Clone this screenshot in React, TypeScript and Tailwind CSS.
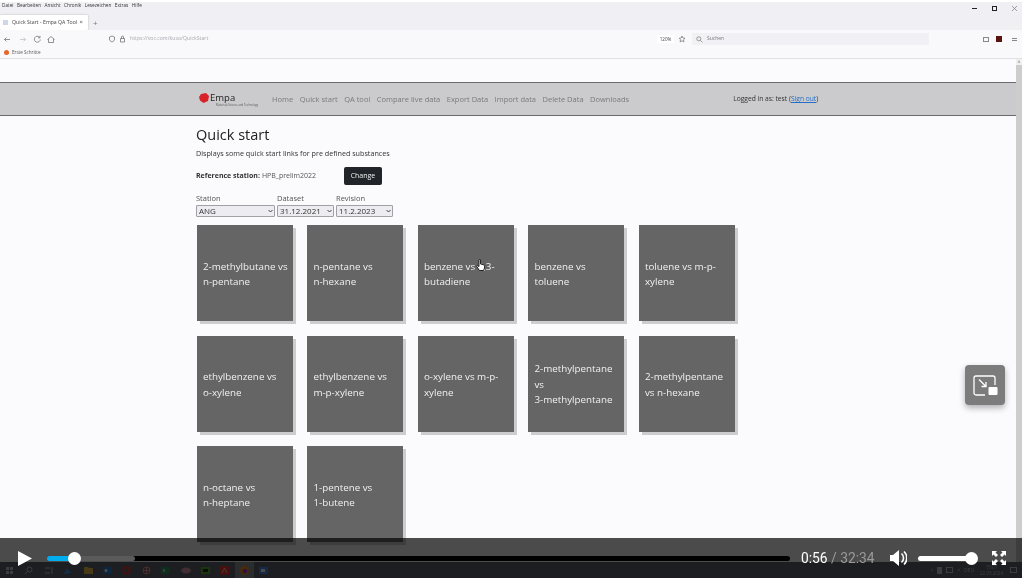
const cards = [
  ["2-methylbutane vs", "n-pentane"],
  ["n-pentane vs", "n-hexane"],
  ["benzene vs 1,3-", "butadiene"],
  ["benzene vs", "toluene"],
  ["toluene vs m-p-", "xylene"],
  ["ethylbenzene vs", "o-xylene"],
  ["ethylbenzene vs", "m-p-xylene"],
  ["o-xylene vs m-p-", "xylene"],
  ["2-methylpentane", "vs", "3-methylpentane"],
  ["2-methylpentane", "vs n-hexane"],
  ["n-octane vs", "n-heptane"],
  ["1-pentene vs", "1-butene"],
]

const menu = ["Datei", "Bearbeiten", "Ansicht", "Chronik", "Lesezeichen", "Extras", "Hilfe"]
const nav = ["Home", "Quick start", "QA tool", "Compare live data", "Export Data", "Import data", "Delete Data", "Downloads"]

function Card({ lines }: { lines: string[] }) {
  return (
    <div className="w-[96px] h-[96px] bg-[#666565] shadow-[3px_3px_0_#cdcdcf] flex flex-col justify-center pt-[2px] pl-[6px] text-[#f1f1f1] text-[9.8px] leading-[15.5px]">
      {lines.map((l) => (
        <span key={l} className="whitespace-nowrap">{l}</span>
      ))}
    </div>
  )
}

function Select({ value, width }: { value: string; width: string }) {
  return (
    <div className={"relative mt-[2px] " + width}>
      <select className="block w-full h-[12px] appearance-none bg-[#ededf1] border border-[#a0a0a6] rounded-[1px] text-[8px] leading-[10px] text-[#333] pl-[2px]" defaultValue={value}>
        <option>{value}</option>
      </select>
      <svg width="5" height="4" viewBox="0 0 5 4" fill="none" stroke="#333" strokeWidth="0.9" className="absolute right-[2px] top-[4px]">
        <path d="M0.5 1l2 2 2-2" />
      </svg>
    </div>
  )
}

function TaskIcons() {
  return (
    <>
      <svg width="9" height="9" viewBox="0 0 9 9" fill="#c8ccd0"><path d="M1 1h3v3H1zM5 1h3v3H5zM1 5h3v3H1zM5 5h3v3H5z" /></svg>
      <svg width="9" height="9" viewBox="0 0 9 9" fill="none" stroke="#c8ccd0"><circle cx="5.500" cy="3.500" r="2.500" /><path d="M3.500 5.500L1 8" /></svg>
      <svg width="9" height="9" viewBox="0 0 9 9" fill="none" stroke="#c8ccd0"><path d="M1 2h5M1 7h5M8 1v7" /></svg>
      <svg width="10" height="9" viewBox="0 0 10 9"><path d="M1 8l3-6 2 3 3 1-5 2z" fill="#3f9be8" /></svg>
      <svg width="9" height="9" viewBox="0 0 9 9"><path d="M0 1h4l1 1h4v6H0z" fill="#f2c14e" /></svg>
      <svg width="9" height="9" viewBox="0 0 9 9"><path d="M0 1h9v7H0z" fill="#2a7fd4" /><circle cx="3" cy="4.500" r="1.500" fill="#fff" /></svg>
      <svg width="9" height="9" viewBox="0 0 9 9" fill="none" stroke="#f0362c" strokeWidth="2"><circle cx="4.500" cy="4.500" r="3.200" /></svg>
      <svg width="9" height="9" viewBox="0 0 9 9" fill="none" stroke="#f09a9a"><circle cx="4.500" cy="4.500" r="3.500" /><path d="M1 4.500h7M4.500 1v7" /></svg>
      <svg width="9" height="9" viewBox="0 0 9 9"><path d="M0 1h9v7H0z" fill="#2a9a5c" /><path d="M2 3l2 3M4 3L2 6" stroke="#fff" strokeWidth="0.7" /></svg>
      <svg width="10" height="9" viewBox="0 0 10 9"><ellipse cx="5" cy="4.500" rx="5" ry="3" fill="#d89aa8" /></svg>
      <svg width="9" height="9" viewBox="0 0 9 9"><path d="M0 1h9v7H0z" fill="#58b030" /><path d="M2 3h5v3H2z" fill="#1c3010" /></svg>
      <svg width="9" height="9" viewBox="0 0 9 9"><path d="M0 0h9v9H0z" fill="#e8362c" /><path d="M2 7l2.500-5L7 7" stroke="#fff" strokeWidth="0.7" fill="none" /></svg>
      <div className="w-[19px] h-[16px] -mx-[5px] bg-white/30 flex items-center justify-center">
        <svg width="9" height="9" viewBox="0 0 9 9"><circle cx="4.500" cy="4.500" r="4.500" fill="#f58a2a" /><circle cx="5" cy="5" r="2.200" fill="#a03ad0" /></svg>
      </div>
      <svg width="9" height="9" viewBox="0 0 9 9"><path d="M0 1h9v7H0z" fill="#4a8cf0" /><path d="M2 3h4v3H2z" fill="#fff" /></svg>
    </>
  )
}

export default function App() {
  return (
    <div className="relative w-[1022px] h-[578px] overflow-hidden flex flex-col bg-[#fbfbfe] blur-[0.5px] font-['Open_Sans','Noto_Sans',sans-serif]">
      {/* browser chrome */}
      <div className="h-[30px] bg-[#f0f0f4] border-t-2 border-white flex flex-col">
        <div className="h-[13px] pb-[6px] flex items-center pl-[2px] gap-[3.500px] text-[4.700px] text-[#333]">
          {menu.map((m) => (
            <span key={m}>{m}</span>
          ))}
          <div className="ml-auto flex items-center gap-[15px] pr-[5px] pt-[5px] text-[#333]">
            <div className="w-[5px] h-[1px] bg-[#222]" />
            <div className="w-[5px] h-[5px] border border-[#222]" />
            <svg width="5" height="5" viewBox="0 0 5 5" className="stroke-[#777]"><path d="M0 0l5 5M5 0l-5 5" strokeWidth="0.7" /></svg>
          </div>
        </div>
        <div className="flex items-end">
          <div className="w-[88px] h-[15px] bg-white shadow-[0_0_2px_#aaa] rounded-[1px] flex items-center pl-[3px] text-[5.200px] text-[#444]">
            <div className="w-[5px] h-[5px] bg-[#cfd8e8] mr-[4px]" />
            <span>Quick Start - Empa QA Tool</span>
            <span className="ml-auto mr-[5px] text-[6px]">×</span>
          </div>
          <span className="ml-[5px] text-[8px] leading-[15px] text-[#777]">+</span>
        </div>
      </div>
      <div className="h-[16px] pt-[2px] bg-[#f9f9fb] flex items-center text-[#666] pl-[3px]">
        <svg width="54" height="9" viewBox="0 0 54 9" fill="none" stroke="#666" strokeWidth="0.7">
          <path d="M7 4.500H1.500M3.500 2.500l-2 2 2 2" />
          <path d="M17 4.500h5.500M20.500 2.500l2 2-2 2" stroke="#bbb" />
          <path d="M36.500 2.200a3 3 0 1 0 .8 2.300M37 .8v2h-2" />
          <path d="M44.500 4.500L48 1.500l3.500 3M45.500 4v3.500h5V4" />
        </svg>
        <svg width="8" height="8" viewBox="0 0 8 8" fill="none" stroke="#666" strokeWidth="0.7" className="ml-[51px]">
          <path d="M4 1l2.500 1v2c0 1.500-1 2.400-2.500 3C2.500 6.400 1.500 5.500 1.500 4V2z" />
        </svg>
        <svg width="7" height="8" viewBox="0 0 7 8" fill="none" stroke="#666" strokeWidth="0.7" className="ml-[3px]">
          <path d="M1.500 3.500h4v3.500h-4zM2.500 3.500V2a1 1 0 0 1 2 0v1.500" />
        </svg>
        <span className="ml-[4px] text-[5.200px] text-[#a8a8b0] w-[527px]">https://voc.com/kuso/QuickStart</span>
        <span className="w-[17px] h-[8px] bg-white text-[4.500px] leading-[8px] text-center text-[#444]">120%</span>
        <svg width="8" height="8" viewBox="0 0 24 24" fill="none" stroke="#666" strokeWidth="2" className="ml-[4px]">
          <path d="M12 3l2.800 6 6.200.8-4.500 4.300 1.200 6.400-5.700-3.200-5.700 3.200 1.200-6.400L3.500 9.800 9.700 9z" />
        </svg>
        <div className="ml-[6px] w-[237px] h-[12px] bg-[#f1f1f5] flex items-center pl-[4px] text-[5px] text-[#777]">
          <svg width="7" height="7" viewBox="0 0 8 8" fill="none" stroke="#666" strokeWidth="0.7"><circle cx="3.200" cy="3.200" r="2.300" /><path d="M5 5l2.300 2.300" /></svg>
          <span className="ml-[4px]">Suchen</span>
        </div>
        <div className="ml-auto flex items-center gap-[7px] pr-[5px]">
          <div className="w-[6px] h-[5px] border border-[#888]" />
          <div className="w-[6px] h-[6px] bg-[#5a1410]" />
          <div className="w-[5px] h-[3px] border-y border-[#888] ml-[3px]" />
        </div>
      </div>
      <div className="h-[13px] bg-[#f9f9fb] border-b border-[#e0e0e6] flex items-center pl-[4px] gap-[3px] text-[4.600px] text-[#555]">
        <div className="w-[5px] h-[5px] rounded-full bg-[#e8662a]" />
        <span>Erste Schritte</span>
      </div>

      {/* page */}
      <div className="flex-1 min-h-0 flex">
        <div className="relative flex-1 min-w-0">
          <div className="h-[23px]" />
          <nav className="h-[34px] pt-[1px] bg-[#cbcbcd] border-y border-[#6a6a6a] flex items-center pl-[199px]">
            <div className="w-[73px] flex flex-col">
              <div className="flex items-center">
                <svg width="10" height="10" viewBox="0 0 10 10"><path d="M2 1l5-1 3 3-1 5-4.500 2L1 7.500 0 4z" fill="#d8222a" /></svg>
                <span className="ml-[1px] text-[9.500px] leading-[10px] text-[#222]">Empa</span>
              </div>
              <span className="ml-[17px] text-[2.700px] leading-[4px] text-[#555] whitespace-nowrap">Materials Science and Technology</span>
            </div>
            <div className="flex gap-[6.500px] text-[7.500px] text-[#7a7a7a] whitespace-nowrap">
              {nav.map((n) => (
                <span key={n}>{n}</span>
              ))}
            </div>
            <span className="ml-[104px] text-[6.700px] text-[#333] whitespace-nowrap">
              Logged in as: test (<span className="text-[#2470c8] underline">Sign out</span>)
            </span>
          </nav>

          <main className="pl-[196px] pt-[9px]">
            <h1 className="text-[14.500px] leading-[20px] text-[#222]">Quick start</h1>
            <p className="mt-[3px] text-[7.200px] leading-[11px] text-[#333]">Displays some quick start links for pre defined substances</p>
            <div className="mt-[8px] h-[18px] flex items-center text-[7px] text-[#333]">
              <b className="font-bold">Reference station:</b>
              <span className="ml-[2px] w-[82px] text-[#555]">HPB_prelim2022</span>
              <button className="w-[38px] h-[18px] bg-[#212529] text-[#eee] rounded-[2px] text-[7px]">Change</button>
            </div>
            <div className="mt-[8px] flex gap-[2px] text-[7.500px] text-[#555]">
              <div className="flex flex-col w-[79px]">
                <span className="leading-[10px]">Station</span>
                <Select value="ANG" width="w-[79px]" />
              </div>
              <div className="flex flex-col w-[57px]">
                <span className="leading-[10px]">Dataset</span>
                <Select value="31.12.2021" width="w-[57px]" />
              </div>
              <div className="flex flex-col w-[57px]">
                <span className="leading-[10px]">Revision</span>
                <Select value="11.2.2023" width="w-[57px]" />
              </div>
            </div>
            <div className="mt-[8px] ml-[0.9px] grid grid-cols-[repeat(5,96px)] gap-[14.500px]">
              {cards.map((c) => (
                <Card key={c.join()} lines={c} />
              ))}
            </div>
          </main>
          {/* mouse pointer over the third card */}
          <svg width="9" height="12" viewBox="0 0 9 12" className="absolute left-[476px] top-[200px]" fill="white" stroke="black" strokeWidth="0.8">
            <path d="M3 1a.8.8 0 0 1 1.500 0v4l3 .8c.8.2 1 .8 1 1.500V9l-1 2.500H3.500L.8 7.500c-.4-.8.4-1.400 1-.9l1.200 1z" />
          </svg>
        </div>
        <div className="w-[6px] bg-[#f0f0f0] flex flex-col">
          <span className="h-[6px] text-[5px] leading-[6px] text-center text-[#555]">^</span>
          <div className="flex-1 bg-[#cdcdcd]" />
        </div>
      </div>

      {/* taskbar */}
      <div className="h-[16px] bg-[#5f656e] flex items-center pl-[5px] gap-[10.400px]">
        <TaskIcons />
        <div className="ml-auto flex items-center gap-[4px] pr-[5px] text-[#c8ccd0] text-[5px] leading-[6px]">
          <span>^</span>
          <div className="w-[5px] h-[7px] bg-[#c8ccd0]" />
          <div className="w-[7px] h-[6px] border border-[#c8ccd0]" />
          <span>×</span>
          <span>DEU</span>
          <div className="ml-[2px] flex flex-col items-center text-[4.500px] leading-[6px]">
            <span>15:07</span>
            <span>22.03.2024</span>
          </div>
          <div className="ml-[3px] w-[7px] h-[6px] border border-[#c8ccd0]" />
        </div>
      </div>

      {/* picture in picture button */}
      <button className="absolute left-[965px] top-[365px] w-[40px] h-[40px] rounded-[4px] bg-[#7c7c7c] shadow-[0_3px_6px_rgba(0,0,0,.3)] flex items-center justify-center">
        <svg width="25" height="21" viewBox="0 0 25 21" fill="none" stroke="white" strokeWidth="1.300">
          <path d="M12 20H3a2 2 0 0 1-2-2V3a2 2 0 0 1 2-2h17a2 2 0 0 1 2 2v7" />
          <path d="M6 4.500l7 7M13 7v4.500H8.500" />
          <rect x="15.500" y="12" width="9" height="8" rx="1" fill="white" stroke="none" />
        </svg>
      </button>

      {/* video controls */}
      <div className="absolute left-0 right-0 bottom-0 h-[40px] bg-black/70 flex items-center text-white">
        <svg width="14" height="15" viewBox="0 0 14 15" className="ml-[18px] shrink-0" fill="white"><path d="M0 0l14 7.500L0 15z" /></svg>
        <div className="relative ml-[15px] w-[743px] h-[5px] rounded-full bg-black">
          <div className="absolute left-0 top-0 h-full w-[88px] rounded-full bg-[#5a5a5a]" />
          <div className="absolute left-0 top-0 h-full w-[27px] rounded-l-full bg-[#00adef]" />
          <div className="absolute left-[21px] -top-[4px] w-[13px] h-[13px] rounded-full bg-white" />
        </div>
        <span className="ml-[11px] text-[13.800px] leading-[20px] whitespace-nowrap font-['Roboto',sans-serif]">
          0:56<span className="text-[#9a9a9a]"> / 32:34</span>
        </span>
        <svg width="17" height="16" viewBox="0 0 17 16" className="ml-[15px] shrink-0" fill="white">
          <path d="M0 5h3l6-5v16l-6-5H0z" />
          <path d="M11.500 3.500a6 6 0 0 1 0 9M14 1.500a9 9 0 0 1 0 13" fill="none" stroke="white" strokeWidth="1.600" />
        </svg>
        <div className="relative ml-[11.500px] w-[54px] h-[5px] rounded-full bg-white shrink-0">
          <div className="absolute right-[-6px] -top-[4px] w-[13px] h-[13px] rounded-full bg-white" />
        </div>
        <svg width="14" height="14" viewBox="0 0 14 14" className="ml-[20px] shrink-0" fill="white">
          <path d="M0 0h5L3.500 1.500 6 4 4 6 1.500 3.500 0 5zM14 0v5l-1.500-1.500L10 6 8 4l2.500-2.500L9 0zM0 14V9l1.500 1.500L4 8l2 2-2.500 2.500L5 14zM14 14H9l1.500-1.500L8 10l2-2 2.500 2.500L14 9z" />
        </svg>
      </div>
    </div>
  )
}
